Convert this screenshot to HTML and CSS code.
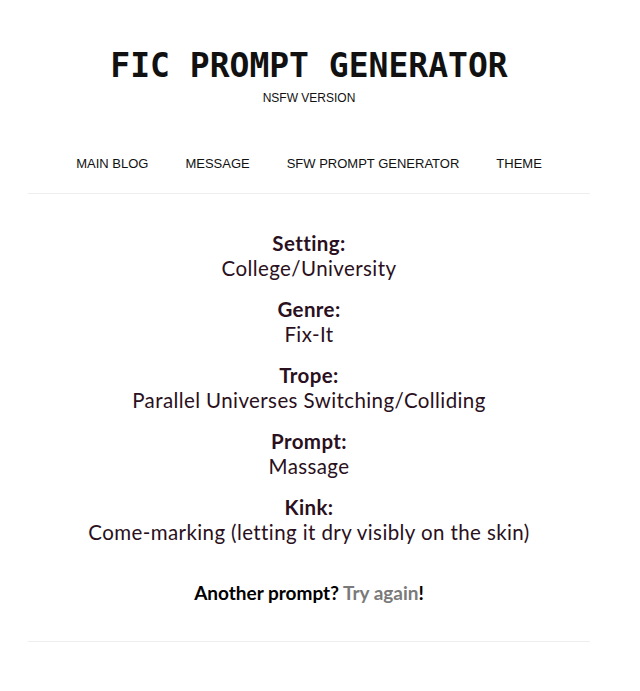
FILE: index.html
```html
<!DOCTYPE html>
<html lang="en">
<head>
    <meta charset="UTF-8">
    <meta name="viewport" content="width=device-width, initial-scale=1.0">
    <title>Fic Prompt Generator</title>
    <link rel="stylesheet" href="styles.css">
</head>
<body>
    <div class="wrap">
        <div class="header">
            <h1 class="title">FIC PROMPT GENERATOR</h1>
            <div class="subtitle">NSFW VERSION</div>
        </div>
        <div class="nav">
            <a href="#">MAIN BLOG</a>
            <a href="#">MESSAGE</a>
            <a href="#">SFW PROMPT GENERATOR</a>
            <a href="#">THEME</a>
        </div>
        <div class="content">
            <div class="item">
                <div class="label">Setting:</div>
                <div class="value">College/University</div>
            </div>
            <div class="item">
                <div class="label">Genre:</div>
                <div class="value">Fix-It</div>
            </div>
            <div class="item">
                <div class="label">Trope:</div>
                <div class="value">Parallel Universes Switching/Colliding</div>
            </div>
            <div class="item">
                <div class="label">Prompt:</div>
                <div class="value">Massage</div>
            </div>
            <div class="item">
                <div class="label">Kink:</div>
                <div class="value">Come-marking (letting it dry visibly on the skin)</div>
            </div>
            <div class="again">Another prompt? <a href="#">Try again</a>!</div>
        </div>
    </div>
</body>
</html>
```

FILE: styles.css
```css
body {
    margin: 0;
    background-color: #fff;
    font-family: 'Lato', 'Open Sans', sans-serif;
}
.wrap {
    width: 562px;
    margin-left: 28px;
}
.header {
    text-align: center;
    padding-top: 46px;
}
.title {
    margin: 0;
    font-family: 'DejaVu Sans Mono', monospace;
    font-size: 33px;
    font-weight: bold;
    line-height: 40px;
    color: #111;
}
.subtitle {
    font-family: 'Liberation Sans', Arial, sans-serif;
    font-size: 12px;
    color: #111;
    margin-top: 5px;
}
.nav {
    display: flex;
    justify-content: center;
    gap: 37px;
    padding: 51px 0 22px;
    border-bottom: 1px solid #eee;
}
.nav a {
    font-family: 'Liberation Sans', Arial, sans-serif;
    font-size: 13px;
    color: #111;
    text-decoration: none;
}
.content {
    text-align: center;
    color: #2a1020;
    padding: 37px 0 37px;
    border-bottom: 1px solid #eee;
}
.item {
    font-size: 20.5px;
    line-height: 24.6px;
    letter-spacing: 0.4px;
    margin-bottom: 16.8px;
}
.label {
    font-weight: bold;
}
.again {
    margin-top: 37px;
    font-size: 19px;
    line-height: 23px;
    font-weight: bold;
    color: #000;
}
.again a {
    color: #7a7a7a;
    text-decoration: none;
}
```
